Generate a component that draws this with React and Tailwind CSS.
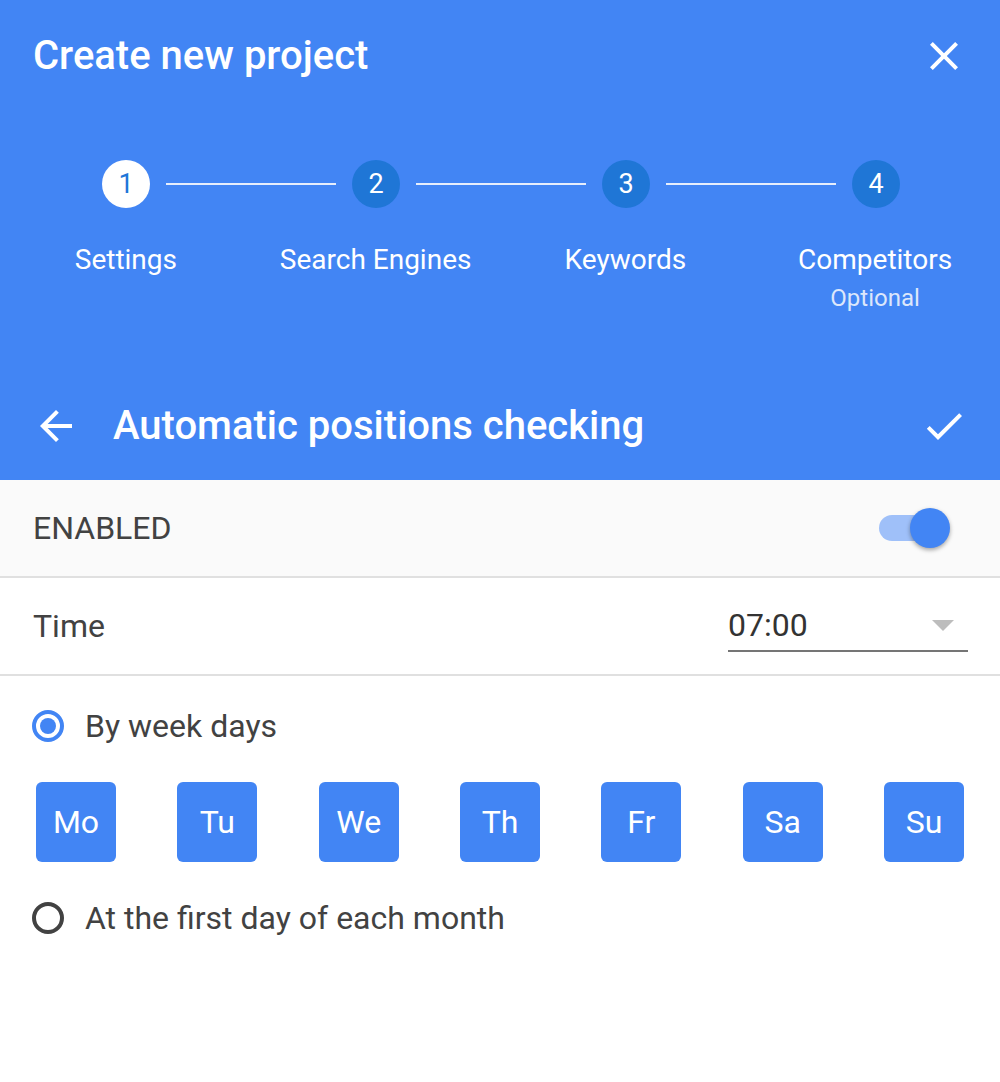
import React from 'react'

const steps = [
    { n: 1, label: 'Settings', active: true },
    { n: 2, label: 'Search Engines' },
    { n: 3, label: 'Keywords' },
    { n: 4, label: 'Competitors', sub: 'Optional' },
]

const days = ['Mo', 'Tu', 'We', 'Th', 'Fr', 'Sa', 'Su']

function StepCircle({ n, active }) {
    return (
        <div
            className={
                active
                    ? 'w-12 h-12 rounded-full bg-white text-[#1e76d8] flex items-center justify-center text-[27px] shrink-0'
                    : 'w-12 h-12 rounded-full bg-[#1f76d6] text-white flex items-center justify-center text-[27px] shrink-0'
            }
        >
            {n}
        </div>
    )
}

export default function App() {
    return (
        <div className="w-[1000px] h-[1082px] bg-white font-['Roboto',_'Liberation_Sans',_sans-serif] text-[#424242]">
            <div className="h-[480px] bg-[#4285f4] flex flex-col text-white">
                <div className="h-[112px] pl-[33px] pr-[32px] flex items-center justify-between">
                    <h1 className="text-[40px] font-medium leading-none">Create new project</h1>
                    <svg className="w-12 h-12" viewBox="0 0 24 24" fill="currentColor">
                        <path d="M19 6.41L17.59 5 12 10.59 6.41 5 5 6.41 10.59 12 5 17.59 6.41 19 12 13.41 17.59 19 19 17.59 13.41 12z" />
                    </svg>
                </div>

                <div className="mt-[48px] pl-[102px] pr-[100px] flex items-center">
                    {steps.map((s, i) => (
                        <React.Fragment key={s.n}>
                            <StepCircle n={s.n} active={s.active} />
                            {i < steps.length - 1 && <div className="flex-1 h-[2px] mx-4 bg-[#e6eefc]"></div>}
                        </React.Fragment>
                    ))}
                </div>

                <div className="mt-[38px] pl-px grid grid-cols-4">
                    {steps.map((s) => (
                        <div key={s.n} className="flex flex-col items-center">
                            <span className="text-[28px] leading-none">{s.label}</span>
                            {s.sub && <span className="mt-[12px] text-[24px] leading-none text-[#dce7fb]">{s.sub}</span>}
                        </div>
                    ))}
                </div>

                <div className="mt-auto h-[108px] pl-[32px] pr-[32px] flex items-center">
                    <svg className="w-12 h-12" viewBox="0 0 24 24" fill="currentColor">
                        <path d="M20 11H7.83l5.59-5.59L12 4l-8 8 8 8 1.41-1.41L7.83 13H20v-2z" />
                    </svg>
                    <h2 className="ml-[33px] text-[40px] font-medium leading-none flex-1">Automatic positions checking</h2>
                    <svg className="w-12 h-12" viewBox="0 0 24 24" fill="currentColor">
                        <path d="M9 16.17L4.83 12l-1.42 1.41L9 19 21 7l-1.41-1.41z" />
                    </svg>
                </div>
            </div>

            <div className="h-[98px] bg-[#fafafa] border-b-2 border-[#e0e0e0] pl-[33px] pr-[50px] flex items-center justify-between">
                <span className="text-[32px]">ENABLED</span>
                <div className="relative w-[71px] h-[40px] flex items-center">
                    <div className="w-[62px] h-[26px] rounded-full bg-[#9fc0f9]"></div>
                    <div className="absolute right-0 top-0 w-10 h-10 rounded-full bg-[#4285f4] shadow-[0_2px_4px_rgba(0,0,0,0.35)]"></div>
                </div>
            </div>

            <div className="h-[98px] border-b-2 border-[#e0e0e0] pl-[33px] pr-[32px] flex items-center justify-between">
                <span className="text-[32px]">Time</span>
                <div className="w-[240px] h-[52px] border-b-2 border-[#757575] flex items-center justify-between pr-[14px]">
                    <span className="text-[32px] text-[#333]">07:00</span>
                    <svg className="w-[22px] h-[11px]" viewBox="0 0 22 11" fill="#bdbdbd">
                        <path d="M0 0h22L11 11z" />
                    </svg>
                </div>
            </div>

            <div className="pt-[34px] pl-[32px] flex items-center">
                <div className="w-8 h-8 rounded-full border-4 border-[#4285f4] flex items-center justify-center">
                    <div className="w-4 h-4 rounded-full bg-[#4285f4]"></div>
                </div>
                <span className="ml-[21px] text-[32px] leading-none">By week days</span>
            </div>

            <div className="mt-[40px] px-[36px] flex justify-between">
                {days.map((d) => (
                    <div key={d} className="w-20 h-20 rounded-[6px] bg-[#4285f4] text-white text-[32px] flex items-center justify-center">
                        {d}
                    </div>
                ))}
            </div>

            <div className="mt-[40px] pl-[32px] flex items-center">
                <div className="w-8 h-8 rounded-full border-4 border-[#424242]"></div>
                <span className="ml-[21px] text-[32px] leading-none">At the first day of each month</span>
            </div>
        </div>
    )
}
